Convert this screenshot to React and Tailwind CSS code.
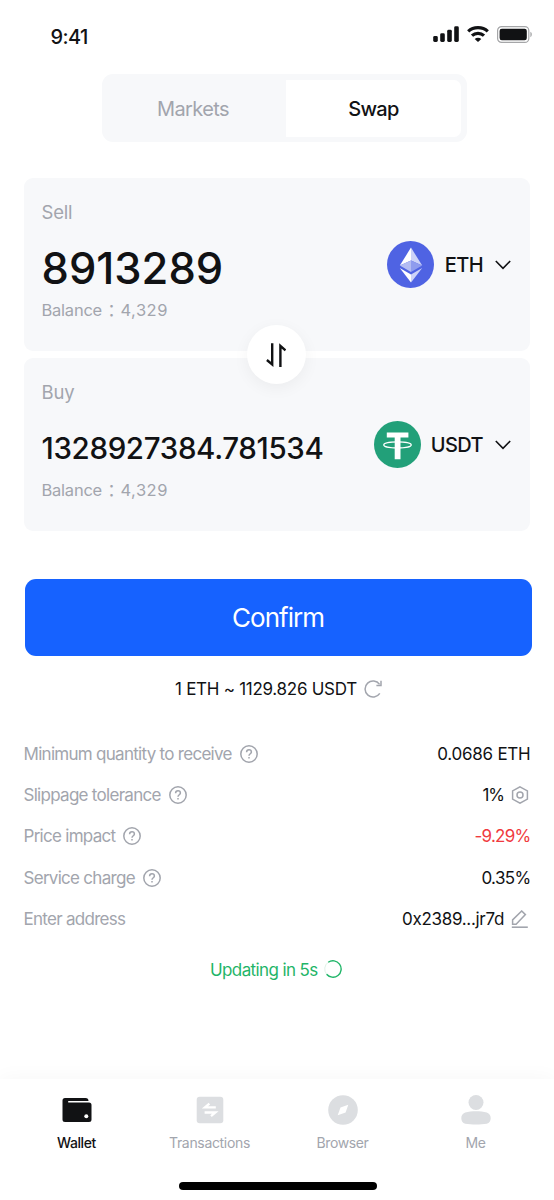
import React from "react";

const SignalIcon = () => (
  <svg className="h-4 w-[26px]" viewBox="0 0 26 16" fill="#111214">
    <rect x="0.2" y="10" width="4.6" height="6" rx="1.4" />
    <rect x="7.2" y="7.3" width="4.6" height="8.7" rx="1.4" />
    <rect x="14.2" y="3.8" width="4.6" height="12.2" rx="1.4" />
    <rect x="21.2" y="0.3" width="4.6" height="15.7" rx="1.4" />
  </svg>
);

const WifiIcon = () => (
  <svg className="h-4 w-[22px]" viewBox="0 0 22 16" fill="none" stroke="#111214" strokeWidth="3.2">
    <path d="M1.2 5.4C6.6 0.4 15.4 0.4 20.8 5.4" />
    <path d="M5 9.7c3.3-3.1 8.7-3.1 12 0" />
    <path d="M11 16 7.7 12.9c1.9-1.7 4.7-1.7 6.6 0Z" fill="#111214" stroke="none" />
  </svg>
);

const BatteryIcon = () => (
  <svg className="h-[17px] w-[36px]" viewBox="0 0 36 17" fill="none">
    <rect x="0.6" y="0.6" width="31.2" height="15.8" rx="4" stroke="#a5a6a8" strokeWidth="1.2" />
    <rect x="2.6" y="2.7" width="27.2" height="11.6" rx="2.2" fill="#111214" />
    <path d="M33.4 5.8c1.9.8 1.9 4.6 0 5.4Z" fill="#a5a6a8" />
  </svg>
);

const EthIcon = () => (
  <svg className="size-[47px]" viewBox="0 0 47 47">
    <circle cx="23.5" cy="23.5" r="23.5" fill="#4f63e3" />
    <path d="M24 6.5 12.8 24.6 24 19.6Z" fill="#fff" />
    <path d="M24 6.5v13.1l11.2 5Z" fill="#cdd3f8" />
    <path d="M12.8 24.6 24 19.6v11.5Z" fill="#b3bcf3" />
    <path d="M35.2 24.6 24 19.6v11.5Z" fill="#8f9cee" />
    <path d="M12.8 26.9 24 41.6v-8.2Z" fill="#fff" />
    <path d="M35.2 26.9 24 41.6v-8.2Z" fill="#cdd3f8" />
  </svg>
);

const UsdtIcon = () => (
  <svg className="size-[47px]" viewBox="0 0 47 47">
    <circle cx="23.5" cy="23.5" r="23.5" fill="#22a079" />
    <path d="M12.8 11.6h21.6v4.8h-7.9v21.9h-5.8V16.4h-7.9Z" fill="#fff" />
    <ellipse cx="23.5" cy="23.9" rx="13.8" ry="3" fill="none" stroke="#fff" strokeWidth="1.1" />
  </svg>
);

const Chevron = () => (
  <svg className="h-[10px] w-4" viewBox="0 0 16 10" fill="none" stroke="#111214" strokeWidth="1.6">
    <path d="M0.8 1 8 8.4 15.2 1" />
  </svg>
);

const SwapArrows = () => (
  <svg className="h-6 w-5" viewBox="0 0 20 24" fill="none" stroke="#111214" strokeWidth="2.4">
    <path d="M6.2 0.2v21.2L0.9 17" />
    <path d="M14.4 24V2.8l5.1 4.5" />
  </svg>
);

const RefreshIcon = () => (
  <svg className="size-[18px]" viewBox="0 0 18 18" fill="none" stroke="#a2a5ad" strokeWidth="1.5">
    <path d="M15.8 13.4A8 8 0 1 1 15.6 4.4" />
    <path d="M17 0.8v4.6h-4.6" />
  </svg>
);

const HelpIcon = () => (
  <svg className="size-[18px]" viewBox="0 0 18 18" fill="none" stroke="#a2a5ad" strokeWidth="1.5">
    <circle cx="9" cy="9" r="8.2" />
    <path d="M6.6 7.2c0-1.4 1-2.4 2.4-2.4s2.4.9 2.4 2.2c0 1.7-2.4 1.8-2.4 3.8" />
    <path d="M9 12v1.6" />
  </svg>
);

const SettingsIcon = () => (
  <svg className="size-[18px]" viewBox="0 0 18 18" fill="none" stroke="#a2a5ad" strokeWidth="1.5">
    <path d="M9 0.8 16.4 4.9v8.2L9 17.2 1.6 13.1V4.9Z" />
    <circle cx="9" cy="9" r="3" />
  </svg>
);

const EditIcon = () => (
  <svg className="size-[18px]" viewBox="0 0 18 18" fill="none" stroke="#a2a5ad" strokeWidth="1.5">
    <path d="M1.6 14.2V9.9L10.7 1l3.7 3.6-9.3 9.6Z" />
    <path d="M0.8 17.2h16" strokeWidth="1.6" />
  </svg>
);

const ProgressIcon = () => (
  <svg className="size-[18px]" viewBox="0 0 18 18" fill="none" strokeWidth="1.4">
    <path d="M4.2 2.3A8.2 8.2 0 0 0 2.6 14.2" stroke="#d5eee0" strokeWidth="0.8" />
    <path d="M4.2 2.3A8.2 8.2 0 1 1 2.6 14.2" stroke="#1fb568" />
  </svg>
);

const WalletIcon = () => (
  <svg className="size-[30px]" viewBox="0 0 30 30">
    <path d="M3 3h20.5a3 3 0 0 1 3 3H6.2v1.5H27A2.5 2.5 0 0 1 29.5 10v14.5A2.5 2.5 0 0 1 27 27H3A2.5 2.5 0 0 1 .5 24.5v-19A2.5 2.5 0 0 1 3 3Z" fill="#111214" />
    <circle cx="24.3" cy="21.2" r="2" fill="#fff" />
  </svg>
);

const TransactionsIcon = () => (
  <svg className="size-[30px]" viewBox="0 0 30 30">
    <rect x="1.7" y="1.7" width="26.6" height="26.6" rx="3" fill="#dcdee1" />
    <path d="M20.8 12.3H10l4.4-3.6M9.6 17.5h10.8L16 21.1" fill="none" stroke="#fff" strokeWidth="2.3" />
  </svg>
);

const BrowserIcon = () => (
  <svg className="size-[30px]" viewBox="0 0 30 30">
    <circle cx="15" cy="15" r="14.8" fill="#dcdee1" />
    <path d="m20.3 9.7-2.7 7.8-7.9 2.8 2.8-7.9Z" fill="#fff" />
  </svg>
);

const MeIcon = () => (
  <svg className="size-[30px]" viewBox="0 0 30 30" fill="#dcdee1">
    <circle cx="15" cy="7.5" r="7.5" />
    <path d="M4.2 17.6c6.2-1.8 15.4-1.8 21.600 0 5.200 1.600 5.200 9.600 0 11.200-6.200 1-15.400 1-21.600 0-5.200-1.600-5.200-9.600 0-11.200Z" />
  </svg>
);

function TokenPanel({ label, amount, amountClass, icon, symbol, symbolClass }) {
  return (
    <section className="flex h-[173px] justify-between rounded-[9px] bg-[#f7f8fa] pr-[19.5px] pl-[17.5px]">
      <div className="flex flex-col pt-[22px]">
        <div className="h-6 text-[18.5px] leading-6 tracking-[-0.01em] text-[#a2a5ad]">{label}</div>
        <div className={amountClass}>{amount}</div>
        <div className="flex h-6 items-center text-[16.5px] leading-6 text-[#a2a5ad]">
          <span className="w-[61px] tracking-[-0.014em]">Balance</span>
          <span className="w-[18px] text-center font-['Noto_Sans_CJK_JP',sans-serif]">：</span>
          <span className="tracking-[0.03em]">4,329</span>
        </div>
      </div>
      <button className="flex items-center">
        {icon}
        <span className={symbolClass}>{symbol}</span>
        <Chevron />
      </button>
    </section>
  );
}

function DetailRow({ label, help, children }) {
  return (
    <div className="flex h-[41.3px] items-center justify-between">
      <div className="flex items-center gap-2 text-[#a2a5ad]">
        <span className="pt-0.5 tracking-[-0.042em]">{label}</span>
        {help && <HelpIcon />}
      </div>
      <div className="flex items-center gap-[7px] text-[#111214]">{children}</div>
    </div>
  );
}

const TABS = [
  { label: "Wallet", icon: <WalletIcon />, cls: "font-medium text-[#111214] tracking-[-0.027em]" },
  { label: "Transactions", icon: <TransactionsIcon />, cls: "text-[#a2a5ad] tracking-[-0.023em]" },
  { label: "Browser", icon: <BrowserIcon />, cls: "text-[#a2a5ad] tracking-[-0.027em]" },
  { label: "Me", icon: <MeIcon />, cls: "text-[#a2a5ad] tracking-[-0.027em]" },
];

export default function App() {
  return (
    <div className="flex h-[1200px] w-[554px] flex-col overflow-hidden bg-white font-['Inter',sans-serif] whitespace-nowrap text-[#111214]">
      <header className="flex h-[74px] items-start justify-between pr-[21px] pl-[50.5px]">
        <span className="mt-[25px] text-[20px] leading-6 font-medium tracking-[-0.03em]">9:41</span>
        <div className="mt-[26px] flex items-start gap-[8px]">
          <SignalIcon />
          <WifiIcon />
          <BatteryIcon />
        </div>
      </header>

      <nav className="ml-[102px] flex h-[68px] w-[364.5px] items-center rounded-[11px] bg-[#f7f8fa] text-[20px]">
        <button className="flex h-full w-[184px] items-center justify-center pt-px pr-[2px] tracking-[-0.03em] text-[#a2a5ad]">Markets</button>
        <button className="flex h-[57px] w-[175px] items-center justify-center rounded-r-[7px] bg-white pt-px font-medium tracking-[-0.036em]">Swap</button>
      </nav>

      <main className="relative mx-6 mt-9 flex flex-col gap-[7px]">
        <TokenPanel
          label="Sell"
          amount="8913289"
          amountClass="h-[74px] text-[43.5px] leading-[88px] font-[480]"
          icon={<EthIcon />}
          symbol="ETH"
          symbolClass="mr-[11.5px] ml-[10.5px] text-[20px] font-[460] tracking-[-0.03em]"
        />
        <TokenPanel
          label="Buy"
          amount="1328927384.781534"
          amountClass="h-[74px] text-[29.5px] leading-[88px] font-[480] tracking-[-0.0115em]"
          icon={<UsdtIcon />}
          symbol="USDT"
          symbolClass="mr-[11.5px] ml-[10px] text-[20px] font-[460] tracking-[-0.03em]"
        />
        <button className="absolute top-[147px] left-[222.5px] flex size-[59px] items-center justify-center rounded-full bg-white shadow-[0_4px_16px_rgba(0,0,0,0.05)]">
          <SwapArrows />
        </button>
      </main>

      <button className="mt-12 ml-[25px] h-[77px] w-[507px] shrink-0 rounded-[11px] bg-[#1662ff] pr-px text-[26px] tracking-[-0.038em] text-white">
        Confirm
      </button>

      <div className="ml-[175px] flex h-[65px] items-center gap-[7px] text-[17px] tracking-[-0.016em]">
        <span className="pt-0.5">1 ETH ~ 1129.826 USDT</span>
        <RefreshIcon />
      </div>

      <section className="mt-3 ml-[23.5px] w-[507px] text-[17px]">
        <DetailRow label="Minimum quantity to receive" help>
          <span className="pt-0.5 tracking-[-0.014em]">0.0686 ETH</span>
        </DetailRow>
        <DetailRow label="Slippage tolerance" help>
          <span className="pt-0.5 tracking-[-0.06em]">1%</span>
          <span className="mr-[1.5px]"><SettingsIcon /></span>
        </DetailRow>
        <DetailRow label="Price impact" help>
          <span className="pt-0.5 tracking-[-0.043em] text-[#f03a3e]">-9.29%</span>
        </DetailRow>
        <DetailRow label="Service charge" help>
          <span className="pt-0.5 tracking-[-0.038em]">0.35%</span>
        </DetailRow>
        <DetailRow label="Enter address">
          <span className="pt-0.5 tracking-[-0.018em]">0x2389...jr7d</span>
          <span className="mr-[1.5px]"><EditIcon /></span>
        </DetailRow>
      </section>

      <div className="mt-[18px] ml-[210px] flex h-6 items-center gap-[6.5px] text-[17px] tracking-[-0.036em] text-[#1fb568]">
        <span className="pt-0.5">Updating in 5s</span>
        <ProgressIcon />
      </div>

      <footer className="mt-auto flex h-[121px] shrink-0 flex-col bg-white pt-4 shadow-[0_0_20px_rgba(0,0,0,0.04)]">
        <div className="ml-[10px] flex w-[532px]">
          {TABS.map((t) => (
            <button key={t.label} className="flex w-[133px] flex-col items-center">
              {t.icon}
              <span className={"mt-2 text-[14px] leading-5 " + t.cls}>{t.label}</span>
            </button>
          ))}
        </div>
        <div className="mt-[29px] ml-[179px] h-2 w-[198px] rounded-full bg-black" />
      </footer>
    </div>
  );
}
